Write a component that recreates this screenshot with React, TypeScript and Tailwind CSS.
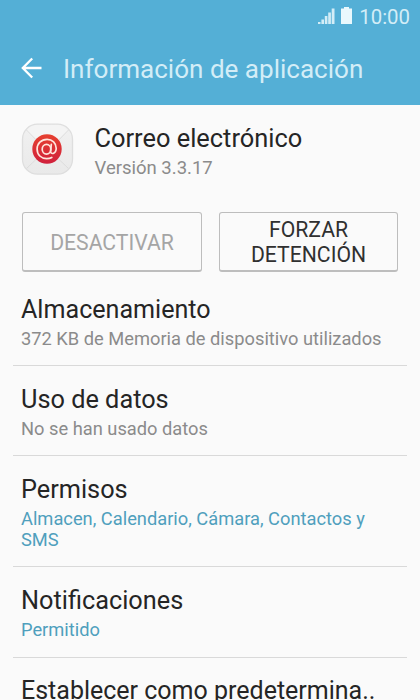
import React from 'react';

function Row({ title, detail, accent, className, titleClass }: { title: string; detail?: string; accent?: boolean; className: string; titleClass: string }) {
  return (
    <section className={`ml-[13px] mr-[13px] shrink-0 border-b border-[#d9d9d9] pl-[8px] ${className}`}>
      <h2 className={`whitespace-nowrap leading-[30px] text-[#252525] ${titleClass}`}>{title}</h2>
      {detail && <p className={`mt-[3px] whitespace-pre text-[18.3px] leading-[21px] ${accent ? 'text-[#4f9fbd]' : 'text-[#8b8b8b]'}`}>{detail}</p>}
    </section>
  );
}

export default function App() {
  return (
    <main className="flex h-[700px] w-[420px] flex-col overflow-hidden bg-[#fafafa] font-['Roboto',sans-serif]">
      <header className="h-[105px] shrink-0 bg-[#54afd6] text-[#d3edf7]">
        <div className="flex h-[33px] items-center justify-end pr-[10px]">
          <svg className="mt-[-1px]" width="17" height="16" viewBox="0 0 17 16" fill="currentColor"><path d="M0 14h2.5v2H0zM3.4 11.500h2.600V16H3.400zM6.800 8h2.600v8H6.800zM10.200 4.500h2.700V16h-2.700zM13.700 0.500h2.800V16h-2.800z" /></svg>
          <svg className="mt-[-3px] ml-[6px] text-[#e9f8fd]" width="12" height="17" viewBox="0 0 12 17" fill="currentColor"><path d="M3 0h5v1.5h3V17H0V1.5h3z" /></svg>
          <span className="ml-[6px] mt-px text-[20.4px]">10:00</span>
        </div>
        <div className="flex h-[72px] items-center pl-[21px]">
          <svg className="-mt-[2px] text-white" width="22" height="22" viewBox="0 0 22 22" fill="none" stroke="currentColor" strokeWidth="2.3"><path d="M20.500 11H2M11.200 1.500L1.800 11l9.400 9.500" /></svg>
          <h1 className="ml-[20px] mt-px whitespace-nowrap text-[26.05px] leading-[39px]">Información de aplicación</h1>
        </div>
      </header>
      <div className="flex h-[107px] shrink-0 pl-[21px] pt-[18px]">
        <svg width="53" height="53" viewBox="0 0 53 53">
          <defs>
            <linearGradient id="envelope" x2="0" y2="1"><stop stopColor="#f1f1f1" /><stop offset="1" stopColor="#e9e9e9" /></linearGradient>
            <linearGradient id="seal" x2="0" y2="1"><stop stopColor="#e6402f" /><stop offset="1" stopColor="#d0203c" /></linearGradient>
          </defs>
          <rect x="1.500" y="1.200" width="50" height="50" rx="15" fill="url(#envelope)" />
          <path d="M6 7L24 25q2.500 2 5 0L47 7Q42 2 37 2H16Q10 2 6 7Z" fill="#f4f4f4" />
          <path d="M5.500 7L24 26M47.500 7L29 26M5.500 45.500L25 27M47.500 45.500L28 27" fill="none" stroke="#d8d8d8" strokeWidth="0.8" />
          <rect x="1.500" y="1.200" width="50" height="50" rx="15" fill="none" stroke="#dedede" strokeWidth="1.3" />
          <circle cx="26" cy="26" r="14.700" fill="url(#seal)" />
          <g fill="none" stroke="#ffe5dd" strokeWidth="1.7" strokeLinecap="round">
            <ellipse cx="25.500" cy="26.200" rx="4.300" ry="4.900" />
            <path d="M30.300 21.300l-.7 7c-.2 3.500 5.600 3 5.600-3 0-5.300-3.900-9-9.100-9-5.900 0-10 4.300-10 9.700 0 5.900 4 9.600 9.500 9.600 2 0 3.800-.4 5.200-1.200" />
          </g>
        </svg>
        <div className="ml-[20.500px]">
          <h2 className="whitespace-nowrap text-[25.4px] leading-[30px] text-[#252525]">Correo electrónico</h2>
          <p className="mt-[5px] text-[18.5px] leading-[21px] text-[#8b8b8b]">Versión 3.3.17</p>
        </div>
      </div>
      <div className="flex h-[60px] shrink-0 gap-[17px] pl-[22px] text-[21.2px] leading-[25px]">
        <button className="w-[180px] rounded-[3px] border border-b-2 border-[#bdbdbd] pt-px text-[#a5a5a5]">DESACTIVAR</button>
        <button className="w-[179px] rounded-[3px] border border-b-2 border-[#bdbdbd] text-[#303030]">FORZAR<br />DETENCIÓN</button>
      </div>
      <Row className="h-[94px] pt-[23px]" titleClass="text-[25.1px]" title="Almacenamiento" detail="372 KB de Memoria de dispositivo utilizados" />
      <Row className="h-[90px] pt-[19px]" titleClass="text-[25.3px]" title="Uso de datos" detail="No se han usado datos" />
      <Row className="h-[111px] pt-[19px]" titleClass="text-[25.3px]" title="Permisos" detail={'Almacen, Calendario, Cámara, Contactos y\nSMS'} accent />
      <Row className="h-[91px] pt-[19px]" titleClass="text-[25.3px]" title="Notificaciones" detail="Permitido" accent />
      <Row className="h-[91px] pt-[18px]" titleClass="text-[25px]" title="Establecer como predetermina.." />
    </main>
  );
}
